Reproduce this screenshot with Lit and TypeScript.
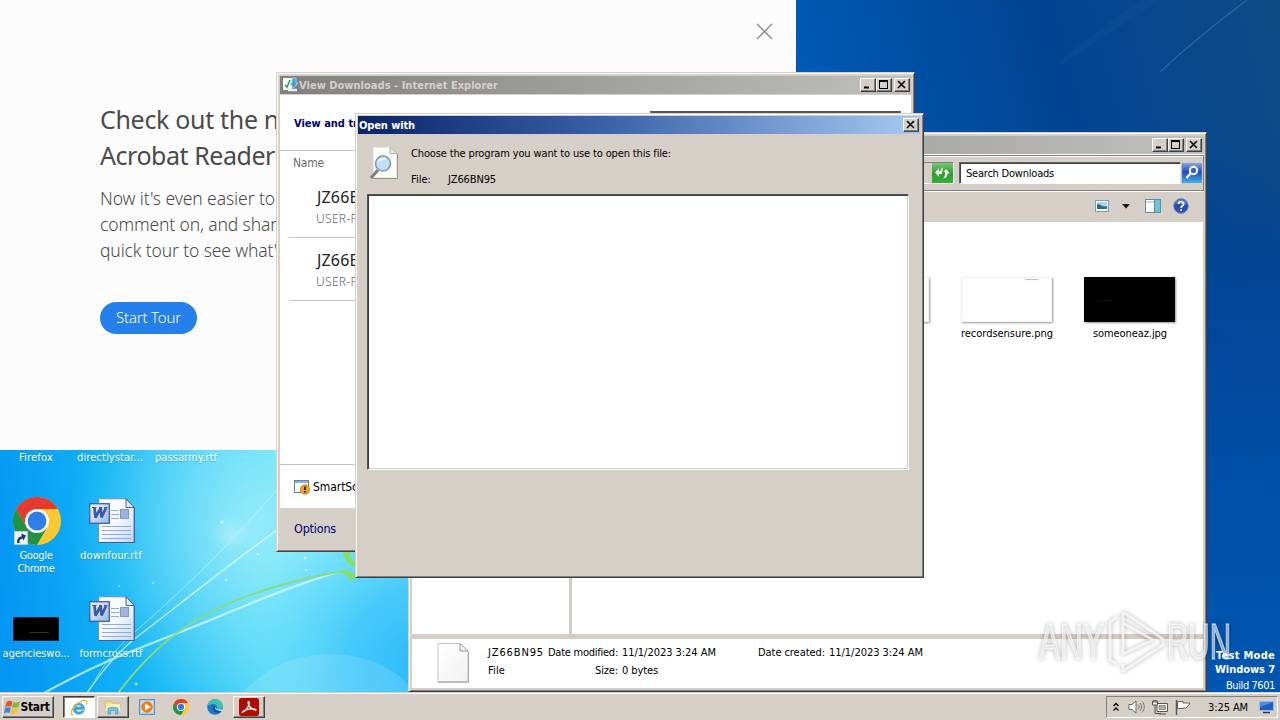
import { LitElement, html, css, svg } from "lit";
import { customElement, property } from "lit/decorators.js";

/** Inline label that tracks its letters so the text takes the given width. */
@customElement("fit-text")
class FitText extends LitElement {
  @property({ type: Number }) w = 0;
  static styles = css`
    :host { display: inline-block; white-space: pre; flex: none; }
  `;
  render() {
    return html`<slot></slot>`;
  }
  firstUpdated() {
    const text = this.textContent ?? "";
    const range = document.createRange();
    range.selectNodeContents(this);
    const natural = range.getBoundingClientRect().width;
    if (this.w && natural) {
      this.style.letterSpacing = `${(this.w - natural) / text.length}px`;
    }
  }
}

const wallpaper = html`<svg class="wall" viewBox="0 0 1280 720" width="1280" height="720" aria-hidden="true">
  <defs>
    <linearGradient id="wl" gradientUnits="userSpaceOnUse" x1="0" y1="600" x2="420" y2="540">
      <stop offset="0" stop-color="#0596f4" /><stop offset=".3" stop-color="#12b4f5" />
      <stop offset=".62" stop-color="#5cdcf8" /><stop offset="1" stop-color="#8deaf9" />
    </linearGradient>
    <radialGradient id="wg" gradientUnits="userSpaceOnUse" cx="250" cy="530" r="180">
      <stop offset="0" stop-color="#aef1fb" stop-opacity=".7" /><stop offset="1" stop-color="#9af0fa" stop-opacity="0" />
    </radialGradient>
    <radialGradient id="wb" gradientUnits="userSpaceOnUse" cx="430" cy="670" r="190">
      <stop offset="0" stop-color="#27b6fa" /><stop offset=".45" stop-color="#3cc5fa" stop-opacity=".85" /><stop offset="1" stop-color="#5cd8fa" stop-opacity="0" />
    </radialGradient>
    <linearGradient id="wr" gradientUnits="userSpaceOnUse" x1="800" y1="120" x2="1280" y2="0">
      <stop offset="0" stop-color="#005ab6" /><stop offset=".5" stop-color="#004593" /><stop offset="1" stop-color="#0f4a86" />
    </linearGradient>
    <linearGradient id="wr2" x1="0" y1="0" x2="0" y2="1">
      <stop offset="0" stop-color="#00408a" stop-opacity="0" /><stop offset=".3" stop-color="#00469a" stop-opacity=".9" />
      <stop offset=".6" stop-color="#004ea6" /><stop offset="1" stop-color="#0056b3" />
    </linearGradient>
    <radialGradient id="dot"><stop offset="0" stop-color="#fff" stop-opacity=".25" /><stop offset="1" stop-color="#fff" stop-opacity="0" /></radialGradient>
  </defs>
  <rect width="1280" height="720" fill="url(#wl)" />
  <rect y="440" width="500" height="260" fill="url(#wg)" />
  <rect y="440" width="500" height="260" fill="url(#wb)" />
  <path d="M236 700C262 668 300 650 345 655C375 658 400 672 412 690V700Z" fill="#fff" opacity=".13" />
  <ellipse cx="230" cy="534" rx="20" ry="18" fill="url(#dot)" />
  <path d="M87 693C104 668 120 650 137 637C185 600 235 560 280 528" stroke="#e4fbff" stroke-width="1.500" opacity=".75" fill="none" />
  <path d="M95 680C110 655 122 643 137 630C185 588 235 540 280 486" stroke="#d6f8fe" stroke-width="1" opacity=".55" fill="none" />
  <path d="M44 693C100 662 130 652 165 638C220 618 270 592 345 570" stroke="#d8f8fe" stroke-width="2.200" opacity=".75" fill="none" />
  <path d="M118 693C165 632 215 594 343 571" stroke="#86dc7c" stroke-width="1.800" fill="none" />
  <path d="M343 552C344 560 349 566 357 568V563C352 562 350 557 350 552ZM340 570C346 568 352 573 357 576V579L352 578L350 583C349 576 345 573 340 572Z" fill="#84e060" />
  <g fill="#dffaff"><circle cx="222" cy="522" r="1.500" /><circle cx="226" cy="580" r="1.300" /><circle cx="153" cy="583" r=".8" /><circle cx="119" cy="586" r=".8" /><circle cx="136" cy="684" r="1.300" /><circle cx="305" cy="558" r="1.300" /><circle cx="258" cy="554" r="1" /><circle cx="306" cy="570" r="1" /></g>
  <rect x="796" width="484" height="692" fill="url(#wr)" />
  <rect x="796" y="133" width="484" height="559" fill="url(#wr2)" />
  <path d="M1060 60L1140 0H1160L1060 66Z" fill="#2a6aa8" opacity=".15" />
  <path d="M1160 72C1190 44 1215 24 1247 0" stroke="#4f86bd" stroke-width="1.400" opacity=".45" fill="none" />
</svg>`;

const chrome = (s: number) => html`<svg width=${s} height=${s} viewBox="0 0 48 48">
  <circle cx="24" cy="24" r="24" fill="#fcc934" />
  <path d="M3.200 12A24 24 0 0 1 44.800 12H24L13.600 30Z" fill="#e33b2e" />
  <path d="M3.200 12L13.600 30L24 36L34.400 30L24 48A24 24 0 0 1 3.200 12Z" fill="#229342" />
  <circle cx="24" cy="24" r="12" fill="#fff" /><circle cx="24" cy="24" r="9.400" fill="#2f7de9" />
</svg>`;

const word = html`<svg width="46" height="46" viewBox="0 0 46 46">
  <defs><linearGradient id="pg" x1="0" y1="0" x2="1" y2="1"><stop offset="0" stop-color="#fff" /><stop offset=".5" stop-color="#f6f9ff" /><stop offset="1" stop-color="#c4d4f2" /></linearGradient>
  <linearGradient id="wd" x1="0" y1="0" x2="1" y2="1"><stop offset="0" stop-color="#f4f8ff" /><stop offset="1" stop-color="#9ab8e8" /></linearGradient></defs>
  <path d="M9.500 .8H37L45.300 9.500V44.500H9.500Z" fill="url(#pg)" stroke="#6c8cc4" stroke-width=".9" />
  <path d="M9.500 44.500H45.300V10" fill="none" stroke="#3f5f9c" stroke-width="1.200" />
  <path d="M37 .8V9.500H45.300Z" fill="#dfe8f8" stroke="#35568f" stroke-width=".9" />
  <path d="M22 12.500H30M22 16.500H30M22 20.500H30M13 28.500H42M13 32.500H42M13 36.500H42M13 40.500H42" stroke="#8facd8" />
  <rect x="31.500" y="11.500" width="8" height="9" fill="#9db4da" stroke="#7c98cc" />
  <rect x=".7" y="5.700" width="19.600" height="19.600" fill="url(#wd)" stroke="#4068b0" stroke-width="1.400" />
  <path d="M3 9.500H7.500M10 9.500H13M15 9.500H18.500" stroke="#3c5aa8" stroke-width="1.200" />
  <path d="M5.500 10L6.500 19.500L11.700 10L12.500 19.500L17 10" fill="none" stroke="#3c5aa8" stroke-width="2.700" stroke-linejoin="bevel" />
</svg>`;

const glyphs = {
  min: svg`<path d="M4 9.500H9" stroke="#000" stroke-width="2" />`,
  max: svg`<path d="M3 2.500H12M3.500 2V11M11.500 2V11M3 10.500H12" stroke="#000" /><path d="M3 3H12" stroke="#000" stroke-width="2" />`,
  close: svg`<path d="M4 3L11 10M11 3L4 10" stroke="#000" stroke-width="1.600" />`,
};
const cap = (k: keyof typeof glyphs) => html`<span class="cap ${k}"><svg width="15" height="13" viewBox="0 0 15 13">${glyphs[k]}</svg></span>`;

@customElement("app-root")
class AppRoot extends LitElement {
  static styles = css`
    :host { display: block; width: 1280px; height: 720px; overflow: hidden; --face: #d5cfc8;
      font: 11px/14px "DejaVu Sans Condensed", "DejaVu Sans", sans-serif; color: #000; }
    * { box-sizing: border-box; }
    svg { display: block; flex: none; }
    .desktop { position: relative; width: 1280px; height: 720px; overflow: hidden; }
    .wall { position: absolute; inset: 0; }

    .icon { position: absolute; width: 76px; display: flex; flex-direction: column; align-items: center; color: #fff; line-height: 13px; text-shadow: 0 1px 1px #0a5a9a60; }
    .i1 { left: -2px; top: 451px; } .i2 { left: 72px; top: 451px; } .i3 { left: 148px; top: 451px; }
    .i4 { left: -2px; top: 497px; } .i5 { left: 73px; top: 498px; } .i6 { left: -2px; top: 617px; } .i7 { left: 73px; top: 596px; }
    .i4 .pic { margin: 0 -1px 4px 1px; } .i5 .pic, .i7 .pic { margin: 0 -1px 5px 1px; }
    .pic { position: relative; }
    .short { position: absolute; left: 1px; bottom: 0; }
    .dark { width: 46px; height: 24px; background: #000; border: 1px solid #223; margin-bottom: 6px; display: flex; align-items: flex-end; justify-content: center; padding: 0 0 7px 6px; }
    .dark i { width: 20px; height: 1px; background: #1a3a28; }

    .tour { position: absolute; left: 0; top: 0; width: 796px; height: 450px; background: #fcfcfc; padding: 22px 22px 0 100px; display: flex; flex-direction: column; align-items: flex-start; font-family: "Noto Sans", sans-serif; color: #4b4b4b; }
    .x { align-self: flex-end; margin: 1px 0 60px; }
    .tour h1 { margin: 0 0 12px; font-size: 25px; line-height: 36px; font-weight: 400; display: flex; flex-direction: column; }
    .tour p { margin: 0 0 39px; font-size: 17.500px; line-height: 26px; font-weight: 300; display: flex; flex-direction: column; }
    .pill { width: 97px; height: 32px; border-radius: 16px; background: #2680eb; color: #fff; font-size: 15px; font-weight: 300; display: flex; align-items: center; justify-content: center; padding-bottom: 2px; }

    .win { position: absolute; background: var(--face); border: 1px solid; border-color: var(--face) #404040 #404040 var(--face); box-shadow: inset 1px 1px #fff, inset -1px -1px #808080; display: flex; flex-direction: column; }
    .bar { height: 18px; flex: none; display: flex; align-items: center; font-weight: 700; color: #d5cfc8; background: linear-gradient(90deg, #808080, #c0c0bc); padding-right: 2px; }
    .bar fit-text { padding-top: 1px; }
    .sp { flex: 1; }
    .cap { width: 16px; height: 14px; background: var(--face); border: 1px solid; border-color: #fff #404040 #404040 #fff; box-shadow: inset -1px -1px #808080; display: flex; flex: none; overflow: hidden; }
    .cap svg { margin: -1px 0 0 -1px; }
    .cap.close { margin-left: 2px; }

    .ex { left: 408px; top: 132px; width: 799px; height: 560px; padding: 3px 2px 2px 3px; }
    .nav { margin-top: 1px; height: 36px; flex: none; border: 1px solid #808080; border-left: 0; box-shadow: inset 0 1px #fff, 0 1px #fff, 0 -1px #fff; display: flex; align-items: center; justify-content: flex-end; padding: 0 1px 0 0; }
    .addr { width: 541px; height: 22px; border: 1px solid #808080; border-bottom-color: #fff; border-right-color: #fff; margin-right: 5px; display: flex; justify-content: flex-end; align-items: center; }
    .search { width: 222px; height: 22px; background: #fff; border: 1px solid; border-color: #606060 #e8e4dc #fff #606060; box-shadow: inset 1px 1px #404040; padding: 1px 6px 0; display: flex; align-items: center; }
    .cmd { height: 31px; flex: none; display: flex; align-items: center; justify-content: flex-end; padding: 0 15px 1px 0; }
    .cmd .a { margin-right: 12px; } .cmd .b { margin-right: 14px; } .cmd .c { margin-right: 12px; }
    .panes { flex: 1; display: flex; background: #fff; margin-right: 1px; }
    .tree { width: 157px; border-right: 3px solid #d0ccc6; box-sizing: content-box; }
    .files { flex: 1; display: flex; justify-content: flex-end; padding: 55px 12px 0 0; }
    .file { width: 123px; display: flex; flex-direction: column; align-items: center; gap: 3px; }
    .thumb { width: 91px; height: 45px; background: #fff; border: 1px solid #f2f0f0; box-shadow: 1px 1px 2px #999; margin: 0 1px 2px 0; padding: 1px 13px; display: flex; justify-content: flex-end; }
    .file fit-text { margin-left: 1px; }
    .thumb i { width: 13px; height: 1px; background: #e8a0e0; }
    .thumb.k { background: #000; border-color: #000; justify-content: flex-start; padding-top: 22px; } .thumb.k i { background: #0c1218; width: 14px; }
    .det { height: 54px; flex: none; background: #fff; border-top: 5px solid #d3cdc7; margin: 0 1px 1px 0; display: flex; padding: 2px 0 0 25px; }
    .det svg { margin: 1px 19px 0 0; }
    .dc { display: grid; grid-template-columns: 60px 74px 136px 71px 96px; grid-auto-rows: 18px; line-height: 18px; align-content: start; padding-top: 3px; }
    .sz { display: flex; justify-content: flex-end; padding-right: 4px; }

    .dl { left: 276px; top: 72px; width: 639px; height: 480px; padding: 3px; }
    .dl .bar { padding: 0 1px 0 2px; }
    .body { flex: 1; background: #fff; margin-top: 1px; display: flex; flex-direction: column; }
    .hd { height: 56px; flex: none; border-bottom: 1px solid #c4c4c4; display: flex; justify-content: space-between; padding: 16px 10px 0 14px; }
    .hd b { color: #00006b; line-height: 25px; }
    .hd i { width: 251px; height: 20px; border: 1px solid #8a8a8a; border-top: 2px solid #555; }
    .col { color: #6d6d6d; font-size: 12px; line-height: 25px; padding-left: 13px; height: 24px; }
    .item { height: 63px; margin-left: 9px; border-bottom: 1px solid #c9c9c9; padding: 11px 0 0 27px; font-weight: 300; display: flex; flex-direction: column; align-items: flex-start; }
    .item .n { font-size: 16px; line-height: 22px; padding-left: 1px; font-family: "Noto Sans", sans-serif; font-weight: 400; color: #222; }
    .item .u { font-size: 12px; line-height: 21px; color: #666; font-family: "Noto Sans", sans-serif; }
    .smart { margin-top: auto; border-top: 1px solid #c4c4c4; height: 44px; flex: none; padding-left: 14px; display: flex; align-items: center; gap: 3px; font-size: 12px; }
    .opt { height: 40px; flex: none; padding: 0 14px; color: #00006b; font-size: 12.500px; line-height: 41px; }

    .ow { left: 355px; top: 113px; width: 569px; height: 465px; padding: 2px 3px 3px 2px; }
    .ow .bar { background: linear-gradient(90deg, #0a246a, #3c63aa 45%, #a6caf0); color: #fff; padding: 0 1px 0 1px; }
    .ask { display: flex; padding: 12px 0 0 12px; height: 60px; flex: none; }
    .ask .t { margin: 1px 0 0 13px; display: flex; flex-direction: column; gap: 12px; }
    .fl { display: flex; } .fl fit-text:first-child { width: 37px; }
    .list { margin: 0 11px 0 9px; width: 542px; height: 276px; background: #fff; border: 1px solid; border-color: #555 #fff #fff #555; box-shadow: inset 1px 1px #404040, inset -1px -1px var(--face); flex: none; }

    .task { position: absolute; left: 0; top: 692px; width: 1280px; height: 28px; background: var(--face); box-shadow: inset 0 1px var(--face), inset 0 2px #fff; display: flex; align-items: flex-start; padding: 4px 2px 0; }
    .btn { height: 22px; border: 1px solid; border-color: #fff #404040 #404040 #fff; box-shadow: inset -1px -1px #808080; display: flex; align-items: center; justify-content: center; flex: none; width: 32px; }
    .btn.start { width: 52px; font-weight: 700; font-size: 12px; margin-right: 9px; padding-right: 3px; }
    .btn.on { background: #fff; border-color: #404040 #fff #fff #404040; box-shadow: inset 1px 1px #808080; margin-right: 2px; }
    .q { width: 34px; height: 22px; display: flex; align-items: center; justify-content: center; padding-left: 2px; }
    .q + .btn { margin-left: 2px; }
    .tray { height: 22px; width: 172px; border: 1px solid; border-color: #808080 #fff #fff #808080; display: flex; align-items: center; padding: 0 0 0 6px; }
    .tray svg { margin-right: 7px; } .tray .s0 { margin-right: 9px; }
    .tray .clk { margin: 1px 11px 0 10px; }

    .mode { position: absolute; right: 5px; top: 649px; color: #fff; display: flex; flex-direction: column; align-items: flex-end; line-height: 14px; font-weight: 700; }
    .mode .bd { font-weight: 400; line-height: 18px; }
    .mark { position: absolute; left: 1034px; top: 604px; overflow: visible; filter: drop-shadow(0 0 2px #00000070); }
    .mark text { font: 400 50px "Liberation Sans", sans-serif; }
  `;

  render() {
    return html`<div class="desktop">
      ${wallpaper}
      <div class="icon i1"><fit-text w="34">Firefox</fit-text></div>
      <div class="icon i2"><fit-text w="66">directlystar...</fit-text></div>
      <div class="icon i3"><fit-text w="62">passarmy.rtf</fit-text></div>
      <div class="icon i4"><div class="pic">${chrome(48)}
        <svg class="short" width="14" height="14" viewBox="0 0 14 14"><rect x=".5" y=".5" width="13" height="13" fill="#eef4fa" stroke="#b8c8d8" /><path d="M3 12C3 7 5 5.500 8 5.500L7 2.500L12 4.500L9.500 9.500L8.500 7.500C6 8 5 9.500 5.500 12Z" fill="#143c7c" /></svg></div>
        <fit-text w="33">Google</fit-text><fit-text w="37">Chrome</fit-text></div>
      <div class="icon i5"><div class="pic">${word}</div><fit-text w="62">downfour.rtf</fit-text></div>
      <div class="icon i6"><div class="pic dark"><i></i></div><fit-text w="67">agencieswo...</fit-text></div>
      <div class="icon i7"><div class="pic">${word}</div><fit-text w="63">formcross.rtf</fit-text></div>

      <section class="tour">
        <svg class="x" width="20" height="18" viewBox="0 0 20 18"><path d="M3 1L18 16M18 1L3 16" stroke="#8c8c8c" stroke-width="1.300" /></svg>
        <h1><fit-text w="179">Check out the n</fit-text><fit-text w="175">Acrobat Reader</fit-text></h1>
        <p><fit-text w="175">Now it's even easier to</fit-text><fit-text w="177">comment on, and shar</fit-text><fit-text w="177">quick tour to see what'</fit-text></p>
        <div class="pill"><fit-text w="65">Start Tour</fit-text></div>
      </section>

      <section class="win ex">
        <div class="bar"><span class="sp"></span>${cap("min")}${cap("max")}${cap("close")}</div>
        <div class="nav">
          <div class="addr"><svg width="21" height="20" viewBox="0 0 21 20"><defs><linearGradient id="gr" x1="0" y1="0" x2="0" y2="1"><stop offset="0" stop-color="#7cc878" /><stop offset=".5" stop-color="#2f9c2f" /><stop offset="1" stop-color="#35b035" /></linearGradient></defs><rect width="21" height="20" fill="url(#gr)" /><path d="M3 9.500L7 5V8H8.500C8.500 6.500 9.500 5 11 4.500C10 7 10.500 9.500 10 11H7V14ZM18 10.500L14 6L11.500 9H13V11.500C13 13 12 14.500 11 15.500C14 15 15.500 13.500 15.500 10.500Z" fill="#f2fff0" /></svg></div>
          <div class="search"><fit-text w="88">Search Downloads</fit-text></div>
          <svg width="21" height="20" viewBox="0 0 21 20"><defs><linearGradient id="bl" x1="0" y1="0" x2="0" y2="1"><stop offset="0" stop-color="#8ba6e6" /><stop offset=".45" stop-color="#2149bd" /><stop offset="1" stop-color="#3fb6e6" /></linearGradient></defs><rect x="1" width="20" height="20" fill="url(#bl)" stroke="#7a92c8" stroke-width=".5" /><circle cx="12.500" cy="7.500" r="3.700" fill="#3a63cc" stroke="#fff" stroke-width="2" /><path d="M9.500 10.500L5.500 15" stroke="#fff" stroke-width="2.400" /></svg>
        </div>
        <div class="cmd">
          <svg class="a" width="14" height="12" viewBox="0 0 14 12"><rect x=".5" y=".5" width="13" height="11" fill="#fff" stroke="#7b9cbc" /><rect x="2" y="2" width="10" height="7" fill="#a9d2f0" /><path d="M2 4C6 4 8 8 12 6V9H2Z" fill="#2d6d74" /></svg>
          <svg class="b" width="10" height="5" viewBox="0 0 10 5"><path d="M1 0H9L5 4.500Z" fill="#111" /></svg>
          <svg class="c" width="16" height="14" viewBox="0 0 16 14"><rect x=".5" y=".5" width="15" height="13" fill="#fff" stroke="#6886a8" /><path d="M1 3H15" stroke="#8fb0cc" /><rect x="10" y="1" width="5" height="12" fill="#6cc4d4" /><path d="M9.500 1V13" stroke="#6886a8" /></svg>
          <svg width="16" height="16" viewBox="0 0 16 16"><circle cx="8" cy="8" r="7.400" fill="#2a4fae" stroke="#7c93c8" /><path d="M2 6A6.300 6.300 0 0 1 14 6C10 8 6 4 2 6Z" fill="#7f9fe0" opacity=".6" /><path d="M5.600 6C5.600 3 10.600 3 10.600 6C10.600 7.800 8.100 7.700 8.100 10M8.100 11.300V13" stroke="#fff" stroke-width="1.700" fill="none" /></svg>
        </div>
        <div class="panes">
          <div class="tree"></div>
          <div class="files">
            <div class="file"><div class="thumb"></div><fit-text w="84">image.png</fit-text></div>
            <div class="file"><div class="thumb"><i></i></div><fit-text w="92">recordsensure.png</fit-text></div>
            <div class="file"><div class="thumb k"><i></i></div><fit-text w="74">someoneaz.jpg</fit-text></div>
          </div>
        </div>
        <div class="det">
          <svg width="32" height="41" viewBox="0 0 32 41"><defs><linearGradient id="fg" x1="0" y1="0" x2="1" y2="1"><stop offset="0" stop-color="#fff" /><stop offset="1" stop-color="#f1f1f1" /></linearGradient></defs><path d="M1 1.500H23L31 9V39.500H1Z" fill="url(#fg)" stroke="#c4c4c4" /><path d="M1 40.300H31.500V10" stroke="#a8a8a8" fill="none" /><path d="M23 1.500V9H31Z" fill="#f4f4f4" stroke="#999" /></svg>
          <div class="dc">
            <fit-text w="56">JZ66BN95</fit-text><fit-text w="70">Date modified:</fit-text><fit-text w="94">11/1/2023 3:24 AM</fit-text><fit-text w="67">Date created:</fit-text><fit-text w="94">11/1/2023 3:24 AM</fit-text>
            <fit-text w="17">File</fit-text><span class="sz"><fit-text w="23">Size:</fit-text></span><fit-text w="36">0 bytes</fit-text>
          </div>
        </div>
      </section>

      <section class="win dl">
        <div class="bar"><svg width="17" height="16" viewBox="0 0 17 16"><rect x="1" y="1" width="9" height="12" fill="#f4faf4" /><path d="M3 8L5 10L8 3" stroke="#44a04c" stroke-width="1.600" fill="none" /><path d="M10 1H14V6H16L11.500 11L7.500 6H10Z" fill="#3d9de0" stroke="#d8f0ff" stroke-width=".6" /><path d="M6 13H15" stroke="#e4ecf4" stroke-width="2.500" /></svg>
          <fit-text w="199">View Downloads - Internet Explorer</fit-text><span class="sp"></span>${cap("min")}${cap("max")}${cap("close")}</div>
        <div class="body">
          <div class="hd"><b><fit-text w="64">View and tr</fit-text></b><i></i></div>
          <div class="col"><fit-text w="31">Name</fit-text></div>
          <div class="item"><fit-text class="n" w="43">JZ66B</fit-text><fit-text class="u" w="42">USER-P</fit-text></div>
          <div class="item"><fit-text class="n" w="43">JZ66B</fit-text><fit-text class="u" w="42">USER-P</fit-text></div>
          <div class="smart"><svg width="16" height="16" viewBox="0 0 16 16"><rect x=".5" y="1.500" width="14" height="12" fill="#fff" stroke="#5d87a8" /><path d="M1 3H14" stroke="#8ab4d0" stroke-width="2" /><circle cx="11" cy="10.500" r="4.800" fill="#f0a020" stroke="#b87410" stroke-width=".6" /><path d="M11 7.500V11M11 12V13.500" stroke="#222" stroke-width="1.800" /></svg><fit-text w="45">SmartSc</fit-text></div>
        </div>
        <div class="opt"><fit-text w="42">Options</fit-text></div>
      </section>

      <section class="win ow">
        <div class="bar"><fit-text w="56">Open with</fit-text><span class="sp"></span>${cap("close")}</div>
        <div class="ask">
          <svg width="28" height="34" viewBox="0 0 28 34"><path d="M3 1H21L27 7V32H3Z" fill="#fbfbf8" stroke="#d8d8d0" /><path d="M3 32.500H27.500V8" stroke="#9a968e" fill="none" /><path d="M20 1V7.500H27Z" fill="#e2e2dc" stroke="#b8b8b0" /><path d="M8 24L1 32" stroke="#7d7d7d" stroke-width="3" /><circle cx="13" cy="17.500" r="7.500" fill="#c4e0f8" stroke="#7f99ac" stroke-width="1.600" /><path d="M8 16C9 11.500 15 11 17 13C14 13.500 10 15 8 16Z" fill="#fff" opacity=".8" /></svg>
          <div class="t"><fit-text w="260">Choose the program you want to use to open this file:</fit-text>
            <div class="fl"><fit-text w="20">File:</fit-text><fit-text w="48">JZ66BN95</fit-text></div></div>
        </div>
        <div class="list"></div>
      </section>

      <footer class="task">
        <div class="btn start"><svg width="17" height="16" viewBox="0 0 17 16"><path d="M2.500 3C5 1 7 2 8.500 2.500L7 8C5 7 3 7 1 8.500Z" fill="#e8532a" /><path d="M9.500 3C12 4 14 3.500 16 2.500L14.500 8C12.500 9 10 9 8 8.300Z" fill="#7dbb3a" /><path d="M.8 9.500C3 8 5 8 6.800 9L5.300 14C3.500 13 1.500 13.500 0 14.500Z" fill="#3f86d8" /><path d="M7.700 9.300C10 10.300 12 10 14.200 9L12.800 14C11 15 8.500 15.300 6.300 14.300Z" fill="#f6c22c" /></svg><fit-text w="29">Start</fit-text></div>
        <div class="btn on"><svg width="18" height="17" viewBox="0 0 18 17"><path d="M14.500 10.500H5.800C6.300 13.300 10.200 13.700 11.800 11.800H14.300C12.500 16.800 3.200 16.500 3.200 9.500C3.200 2.500 15 2 14.500 10.500ZM5.800 8H11.700C11.200 5.300 6.500 5.300 5.800 8Z" fill="#39a9e8" stroke="#2b86c4" stroke-width=".5" /><path d="M3.500 15.500C.5 16.500 0 13 4 8C8 3 13.500 .5 16 1.500C17.300 2.200 17 4 16 5.500" fill="none" stroke="#e8b83a" stroke-width="1.300" /></svg></div>
        <div class="btn"><svg width="18" height="16" viewBox="0 0 18 16"><path d="M1 2H7L8.500 4H16V8H1Z" fill="#f2dc84" stroke="#c8a848" stroke-width=".6" /><path d="M2 5H16V12H2Z" fill="#f9eeb0" /><path d="M4 15V9.500C4 8 14 8 14 9.500V15H11.500V11.500H6.500V15Z" fill="#6cc0ea" stroke="#3b93c4" stroke-width=".6" /></svg></div>
        <div class="q"><svg width="16" height="16" viewBox="0 0 16 16"><rect x=".5" y=".5" width="15" height="15" fill="#a8c8e4" stroke="#5b93c8" /><rect x="2" y="2.500" width="12" height="11" fill="#d8e8f4" /><circle cx="8" cy="8" r="5.800" fill="#ef7d1a" /><path d="M6 4.500L12 8L6 11.500Z" fill="#fff" /></svg></div>
        <div class="q">${chrome(16)}</div>
        <div class="q"><svg width="16" height="16" viewBox="0 0 16 16"><circle cx="8" cy="8" r="7.800" fill="#1b78cc" /><path d="M.5 7C1 2.500 5 0 8.500 .2C13 .5 16 4 15.800 7.500C15.500 10 12 10.500 10 9.500C11 7 8.500 5 6 5C3.500 5 1.500 6 .5 7Z" fill="#36c3b8" /><path d="M6 6.500C4 10 7 14.500 13 13.500C15 12 14 11.500 12 11.500C9 11.500 7.500 9.500 8.500 7Z" fill="#0e4f9c" /><path d="M8.200 7.500C8 9.500 11 11.300 15 10.200L16 11.500C13 12.500 9.500 11.500 8 9.500Z" fill="#dfe6e8" /></svg></div>
        <div class="btn"><svg width="20" height="18" viewBox="0 0 16 16" preserveAspectRatio="none"><rect width="16" height="16" rx="2" fill="#b30b00" /><path d="M3 12.500C6 11 8.500 7 8 3.500C7.500 2.500 6.800 4 8 6.500C9 9 11.500 11 13.500 10.500C13 9 7 9.500 3.500 11.500Z" fill="none" stroke="#fff" stroke-width="1.100" /></svg></div>
        <span class="sp"></span>
        <div class="tray">
          <svg class="s0" width="6" height="10" viewBox="0 0 6 10"><path d="M.5 4L3 1.500L5.500 4M.5 8.500L3 6L5.500 8.500" stroke="#000" stroke-width="1.300" fill="none" /></svg>
          <svg width="17" height="14" viewBox="0 0 17 14"><path d="M1 4.500H4L8 1V13L4 9.500H1Z" fill="#fff" stroke="#666" /><path d="M10 4.500C11.500 6 11.500 8 10 9.500M12 3C14 5 14 9 12 11M14 1.500C17 4 17 10 14 12.500" stroke="#777" fill="none" /></svg>
          <svg width="16" height="15" viewBox="0 0 16 15"><path d="M5 3.500H15.500V11.500H5Z" fill="#fff" stroke="#555" /><path d="M7 5.500H13.500V9.500H7Z" fill="#aaa" stroke="#777" stroke-width=".7" /><path d="M.5 1V5H5.500V1Z" fill="#fff" stroke="#555" /><path d="M2 0V3M4 0V3M3 5V13.500H9M7 14H14" stroke="#555" fill="none" /></svg>
          <svg width="16" height="15" viewBox="0 0 16 15"><path d="M1.500 0V15" stroke="#555" stroke-width="1.500" /><path d="M2.500 1.500H8V3H15L13 6L11 8H8V8.500H2.500Z" fill="#fff" stroke="#666" /></svg>
          <fit-text class="clk" w="40">3:25 AM</fit-text>
          <svg width="15" height="13" viewBox="0 0 15 13"><rect x=".5" y=".5" width="14" height="9" fill="#1f5fc0" stroke="#9ab8e0" /><path d="M1 1H14L1 6Z" fill="#4c8ce0" /><path d="M4 11.500H11" stroke="#2a3a50" stroke-width="1.500" /></svg>
        </div>
      </footer>

      <svg class="mark" width="210" height="76" viewBox="0 0 210 76">
        <g fill="#fff" fill-opacity=".55" stroke="#fff" stroke-opacity=".55" stroke-width="1.500">
          <text x="5" y="55" textLength="65" lengthAdjust="spacingAndGlyphs">ANY</text>
          <text x="133" y="55" textLength="64" lengthAdjust="spacingAndGlyphs">RUN</text>
        </g>
        <path d="M89 8L129 35V41L89 67V60M89 8V50L119 36L89 19M83 13L76 18V56L83 60" fill="none" stroke-linejoin="round" stroke="#fff" stroke-opacity=".7" stroke-width="3" />
      </svg>
      <div class="mode"><fit-text w="59">Test Mode</fit-text><fit-text w="60">Windows 7</fit-text><fit-text class="bd" w="49">Build 7601</fit-text></div>
    </div>`;
  }
}
